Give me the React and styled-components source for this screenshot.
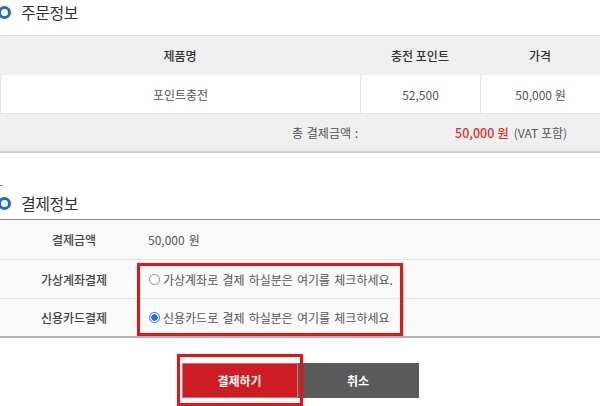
import React from 'react';
import styled, { createGlobalStyle } from 'styled-components';

const GlobalStyle = createGlobalStyle`
  html, body {
    margin: 0;
    padding: 0;
    background: #ffffff;
  }
  body {
    font-family: "Noto Sans CJK KR", "Noto Sans", sans-serif;
    font-size: 12px;
    color: #444;
  }
`;

const Page = styled.div`
  width: 600px;
  height: 406px;
  overflow: hidden;
`;

const SectionTitle = styled.h2`
  display: flex;
  align-items: center;
  gap: 10px;
  height: 24px;
  margin: ${(props) => props.$margin || '0'};
  padding: 0;
  font-size: 16px;
  font-weight: normal;
  color: #333;
  letter-spacing: -0.5px;
`;

const Ring = styled.span`
  display: block;
  width: 13px;
  height: 13px;
  margin-left: -2px;
  box-sizing: border-box;
  border: 3.5px solid #1c6fc0;
  border-radius: 50%;
`;

const OrderTable = styled.div`
  display: grid;
  grid-template-columns: 360px 120px 120px;
  border-top: 1px solid #dcdcdc;
  border-bottom: 2px solid #cfcfcf;
`;

const Cell = styled.div`
  display: flex;
  align-items: center;
  justify-content: center;
  height: ${(props) => props.$h || 38}px;
  background: ${(props) => (props.$head ? '#efefef' : '#ffffff')};
  color: ${(props) => (props.$head ? '#333' : '#555')};
  font-weight: ${(props) => (props.$head ? 500 : 'normal')};
  border-left: ${(props) => (props.$line ? '1px solid #e3e3e3' : 'none')};
  box-sizing: border-box;
`;

const TotalLabel = styled.div`
  grid-column: 1;
  display: flex;
  align-items: center;
  justify-content: flex-end;
  height: 38px;
  padding-right: 2px;
  box-sizing: border-box;
  background: #efefef;
  color: #555;
  word-spacing: 1px;
  border-top: 1px solid #e3e3e3;
`;

const TotalValue = styled.div`
  grid-column: 2 / span 2;
  display: flex;
  align-items: center;
  height: 38px;
  padding-left: 95px;
  gap: 5px;
  box-sizing: border-box;
  background: #efefef;
  color: #555;
  border-top: 1px solid #e3e3e3;
`;

const Price = styled.span`
  color: #ea2a2a;
  font-weight: 500;
  font-size: 12.5px;
`;

const Tick = styled.div`
  width: 3px;
  height: 1px;
  margin-top: 32px;
  background: #888;
`;

const PayTable = styled.div`
  position: relative;
  border-top: 1px solid #8a8a8a;
  border-bottom: 2px solid #b4b4b4;
  background: #fafafa;
`;

const PayRow = styled.div`
  display: grid;
  grid-template-columns: 148px 1fr;
  align-items: center;
  height: ${(props) => props.$h}px;
  border-top: ${(props) => (props.$first ? 'none' : '1px solid #e4e4e4')};
  box-sizing: border-box;
`;

const PayLabel = styled.div`
  text-align: center;
  color: #444;
  font-weight: 500;
`;

const PayValue = styled.div`
  display: flex;
  align-items: center;
  gap: 3px;
  color: #555;
  word-spacing: 1.5px;
`;

const Radio = styled.span`
  display: block;
  width: 11px;
  height: 11px;
  margin-left: 1px;
  box-sizing: border-box;
  border-radius: 50%;
  border: 1px solid ${(props) => (props.$checked ? '#1a73e8' : '#8f8f8f')};
  background: ${(props) =>
    props.$checked
      ? 'radial-gradient(circle, #1a73e8 0 3px, #ffffff 3.5px)'
      : '#ffffff'};
`;

const Highlight = styled.div`
  position: absolute;
  left: ${(props) => props.$x}px;
  top: ${(props) => props.$y}px;
  width: ${(props) => props.$w}px;
  height: ${(props) => props.$h}px;
  box-sizing: border-box;
  border: 3px solid #ee1111;
  pointer-events: none;
`;

const ButtonRow = styled.div`
  position: relative;
  display: flex;
  justify-content: center;
  margin-top: 25px;
`;

const Button = styled.button`
  width: ${(props) => props.$w}px;
  height: 35px;
  border: 1px solid ${(props) => (props.$primary ? '#e26a6f' : '#5a5a5a')};
  background: ${(props) => (props.$primary ? '#cd1c22' : '#5a5a5a')};
  color: #ffffff;
  font-family: inherit;
  font-size: 12px;
  font-weight: bold;
  padding: 0;
  cursor: pointer;
`;

const payMethods = [
  { label: '가상계좌결제', text: '가상계좌로 결제 하실분은 여기를 체크하세요.', checked: false, h: 39 },
  { label: '신용카드결제', text: '신용카드로 결제 하실분은 여기를 체크하세요', checked: true, h: 38 },
];

export default function App() {
  return (
    <Page>
      <GlobalStyle />
      <SectionTitle $margin="0 0 11px 0">
        <Ring />
        주문정보
      </SectionTitle>

      <OrderTable>
        <Cell $head $h={39}>제품명</Cell>
        <Cell $head $h={39}>충전 포인트</Cell>
        <Cell $head $h={39}>가격</Cell>
        <Cell $line>포인트충전</Cell>
        <Cell $line>52,500</Cell>
        <Cell $line>50,000 원</Cell>
        <TotalLabel>총 결제금액 :</TotalLabel>
        <TotalValue>
          <Price>50,000 원</Price>
          <span>(VAT 포함)</span>
        </TotalValue>
      </OrderTable>

      <Tick />

      <SectionTitle $margin="5px 0 4px 0">
        <Ring />
        결제정보
      </SectionTitle>

      <PayTable>
        <PayRow $h={39} $first>
          <PayLabel>결제금액</PayLabel>
          <PayValue>50,000 원</PayValue>
        </PayRow>
        {payMethods.map((m) => (
          <PayRow key={m.label} $h={m.h}>
            <PayLabel>{m.label}</PayLabel>
            <PayValue>
              <Radio $checked={m.checked} />
              {m.text}
            </PayValue>
          </PayRow>
        ))}
        <Highlight $x={137} $y={43} $w={266} $h={73} />
      </PayTable>

      <ButtonRow>
        <Button $primary $w={116}>결제하기</Button>
        <Button $w={121}>취소</Button>
        <Highlight $x={177} $y={-9} $w={126} $h={52} />
      </ButtonRow>
    </Page>
  );
}
